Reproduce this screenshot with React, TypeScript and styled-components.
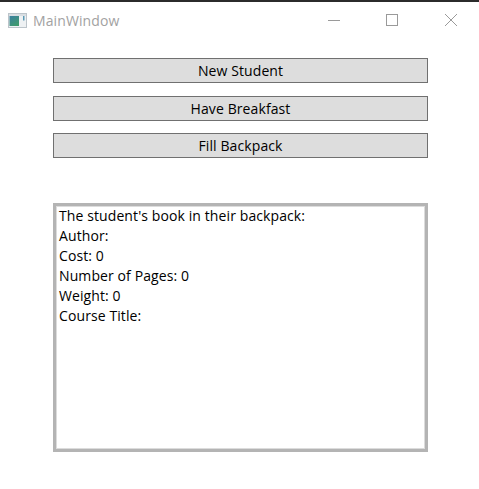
import React from "react";
import styled, { createGlobalStyle } from "styled-components";

const Global = createGlobalStyle`
  html, body { margin: 0; padding: 0; background: #fff; }
  * { box-sizing: border-box; }
`;

const Window = styled.div`
  width: 479px;
  height: 489px;
  background: #fff;
  border-top: 2px solid #2b2b2b;
  font-family: "Open Sans", "Noto Sans", sans-serif;
  overflow: hidden;
`;

const TitleBar = styled.div`
  display: flex;
  align-items: center;
  height: 36px;
  padding-left: 8px;
`;

const Title = styled.span`
  margin-left: 6px;
  font-size: 14px;
  letter-spacing: 0.1px;
  color: #a2a2a2;
`;

const Controls = styled.div`
  margin-left: auto;
  display: flex;
  align-items: center;
  padding-right: 22px;
  gap: 46px;
`;

const MaximizeSlot = styled.span`
  display: block;
  margin-right: 1px;
`;

const Content = styled.div`
  display: flex;
  flex-direction: column;
  padding: 20px 51px 0 53px;
`;

const ActionButton = styled.button`
  display: block;
  width: 375px;
  height: 25px;
  margin-bottom: 12.5px;
  padding: 0;
  background: #dddddd;
  border: 1px solid #707070;
  font-family: inherit;
  font-size: 14px;
  letter-spacing: 0.1px;
  line-height: 23px;
  color: #000;
  text-align: center;
`;

const Output = styled.div`
  margin-top: 32.5px;
  width: 375px;
  height: 249px;
  padding: 0 3px;
  border: 3px solid #b4b4b4;
  box-shadow: inset 0 0 0 1px #dcdcdc;
  font-size: 14px;
  letter-spacing: 0.1px;
  line-height: 20px;
  color: #000;
  white-space: pre-line;
`;

const AppIcon = () => (
  <svg width="19" height="15" viewBox="0 0 19 15" style={{ display: "block" }}>
    <defs>
      <linearGradient id="g" x1="0" y1="0" x2="0.6" y2="1">
        <stop offset="0" stopColor="#3a7fa0" />
        <stop offset="1" stopColor="#3f9a6f" />
      </linearGradient>
    </defs>
    <rect x="0.5" y="0.5" width="18" height="14" fill="#eef1f3" stroke="#bcc4ca" />
    <rect x="1" y="1" width="17" height="2" fill="#d9dee2" />
    <rect x="1.5" y="3" width="9.5" height="10" fill="url(#g)" />
    <rect x="15" y="3" width="1.5" height="4.5" fill="#5a9ab5" />
  </svg>
);

const MinimizeIcon = () => (
  <svg width="12" height="12" viewBox="0 0 12 12" style={{ display: "block" }}>
    <path d="M0 6.5H12" stroke="#9a9a9a" strokeWidth="1" />
  </svg>
);

const MaximizeIcon = () => (
  <svg width="12" height="12" viewBox="0 0 12 12" style={{ display: "block" }}>
    <rect x="0.5" y="0.5" width="11" height="11" fill="none" stroke="#9a9a9a" />
  </svg>
);

const CloseIcon = () => (
  <svg width="12" height="12" viewBox="0 0 12 12" style={{ display: "block" }}>
    <path d="M0 0L12 12M12 0L0 12" stroke="#9a9a9a" strokeWidth="1" />
  </svg>
);

const text = `The student's book in their backpack:
Author:
Cost: 0
Number of Pages: 0
Weight: 0
Course Title:`;

export default function App() {
  return (
    <Window>
      <Global />
      <TitleBar>
        <AppIcon />
        <Title>MainWindow</Title>
        <Controls>
          <MinimizeIcon />
          <MaximizeSlot>
            <MaximizeIcon />
          </MaximizeSlot>
          <CloseIcon />
        </Controls>
      </TitleBar>
      <Content>
        <ActionButton>New Student</ActionButton>
        <ActionButton>Have Breakfast</ActionButton>
        <ActionButton>Fill Backpack</ActionButton>
        <Output>{text}</Output>
      </Content>
    </Window>
  );
}
